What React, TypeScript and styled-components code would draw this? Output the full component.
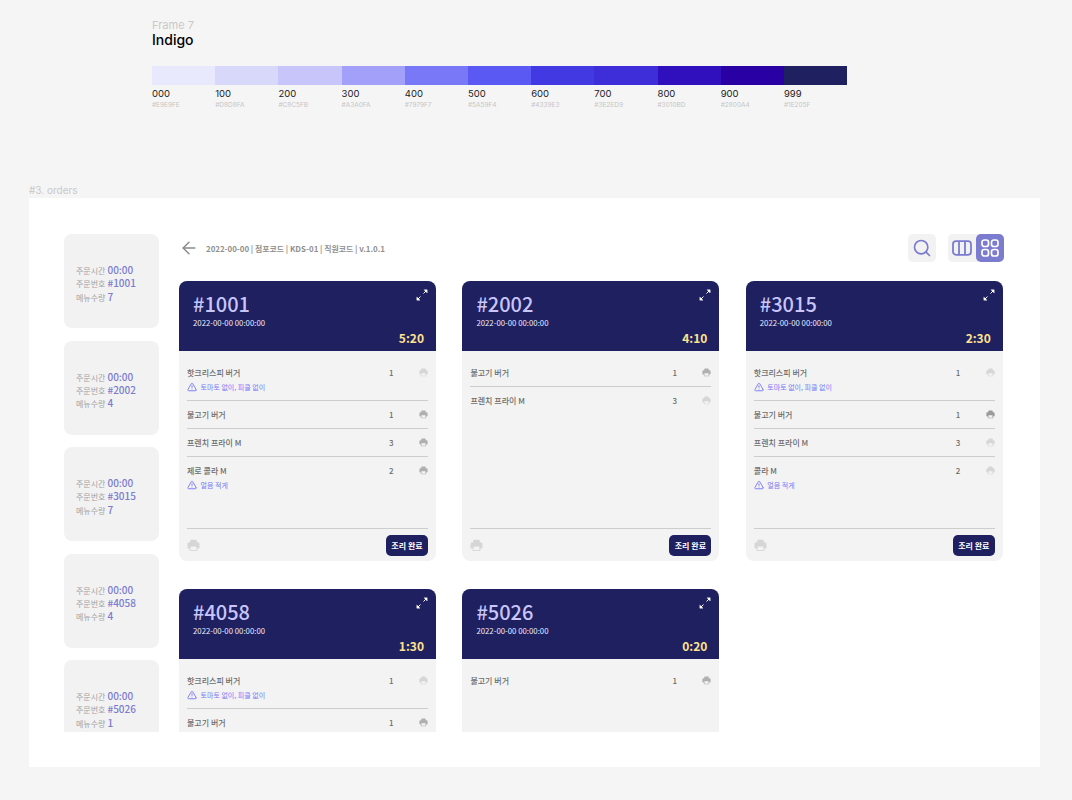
import React from "react";
import styled, { createGlobalStyle } from "styled-components";
import { ArrowLeft, Search, TriangleAlert } from "lucide-react";

const KR = `"Noto Sans CJK KR", "Noto Sans", sans-serif`;

const GlobalStyle = createGlobalStyle`
  html, body {
    margin: 0;
    background: #f5f5f5;
  }
  * {
    box-sizing: border-box;
  }
`;

const Page = styled.div`
  width: 1072px;
  height: 800px;
  overflow: hidden;
  padding: 19px 0 0 29px;
  font-family: Inter, sans-serif;
`;

const Palette = styled.section`
  margin-left: 123px;
  height: 165px;
`;
const FrameName = styled.div`
  font-size: 11px;
  line-height: 13px;
  color: #c9c9c9;
`;
const PaletteTitle = styled.div`
  font-size: 14px;
  line-height: 17px;
  margin-top: -1px;
  font-weight: 500;
  color: #000;
`;
const Swatches = styled.div`
  display: flex;
  width: 695px;
  margin-top: 18px;
`;
const Swatch = styled.div`
  flex: 1;
`;
const SwatchColor = styled.div<{ $color: string }>`
  height: 19px;
  background: ${(p) => p.$color};
`;
const SwatchName = styled.div`
  font-size: 9.5px;
  line-height: 12px;
  margin-top: 3px;
  color: #222;
`;
const SwatchHex = styled.div`
  font-size: 6.5px;
  line-height: 8px;
  margin-top: 1px;
  color: #c6c6c6;
`;

const SectionLabel = styled.div`
  font-size: 10px;
  line-height: 12px;
  height: 14px;
  color: #c9c9c9;
`;
const Frame = styled.main`
  width: 1011px;
  height: 569px;
  background: #fff;
  padding: 36px 36px 35px 35px;
  font-family: ${KR};
`;
const Clip = styled.div`
  display: flex;
  gap: 20px;
  height: 498px;
  overflow: hidden;
`;

const Queue = styled.aside`
  width: 95px;
  flex: none;
  display: flex;
  flex-direction: column;
  gap: 12.5px;
`;
const QueueCard = styled.div`
  height: 94px;
  flex: none;
  background: #f2f2f2;
  border-radius: 8px;
  padding: 29px 0 0 12px;
`;
const QueueRow = styled.div`
  display: flex;
  align-items: baseline;
  gap: 2px;
  height: 13.4px;
  line-height: 13.4px;
  font-size: 8px;
  color: #a3a3a3;
`;
const QueueValue = styled.span`
  font-size: 10px;
  font-weight: 500;
  color: #7b7bcf;
`;

const Content = styled.div`
  flex: 1;
  min-width: 0;
`;
const TopBar = styled.header`
  display: flex;
  align-items: center;
  height: 28px;
  margin-bottom: 19px;
`;
const BackIcon = styled(ArrowLeft)`
  width: 20px;
  height: 20px;
  margin-right: 7px;
  color: #8a8a8a;
  stroke-width: 1.7;
`;
const Breadcrumb = styled.div`
  flex: 1;
  font-size: 7.9px;
  font-weight: 700;
  color: #8f8f8f;
`;
const IconButton = styled.button<{ $active?: boolean }>`
  width: 28px;
  height: 28px;
  padding: 0;
  border: 0;
  display: flex;
  align-items: center;
  justify-content: center;
  border-radius: 5px;
  background: ${(p) => (p.$active ? "#7b7bcf" : "#f2f2f2")};
  color: ${(p) => (p.$active ? "#fff" : "#7b7bcf")};
`;
const Toggle = styled.div`
  display: flex;
  margin-left: 12px;
  border-radius: 5px;
  background: #f2f2f2;
`;

const Board = styled.div`
  display: grid;
  grid-template-columns: repeat(3, 257px);
  column-gap: 26.4px;
  row-gap: 28px;
`;
const Card = styled.article`
  height: 280px;
  display: flex;
  flex-direction: column;
  border-radius: 8px;
  overflow: hidden;
  background: #f3f3f3;
`;
const CardHead = styled.div`
  position: relative;
  height: 70px;
  flex: none;
  padding: 9px 12px 0 14px;
  background: #1e205f;
`;
const OrderNo = styled.div`
  font-size: 20px;
  line-height: 28px;
  font-weight: 500;
  color: #c8c5fb;
`;
const OrderDate = styled.div`
  font-size: 7.8px;
  line-height: 10px;
  font-weight: 400;
  color: #e9e9fe;
`;
const Elapsed = styled.div`
  margin-top: 2px;
  text-align: right;
  font-size: 12px;
  line-height: 16px;
  font-weight: 700;
  color: #ffe28f;
`;
const ExpandIcon = styled.svg`
  position: absolute;
  top: 8px;
  right: 8px;
  width: 12px;
  height: 12px;
`;
const CardBody = styled.div`
  flex: 1;
  display: flex;
  flex-direction: column;
  min-height: 0;
  padding: 8.25px 8px 0;
`;
const ItemList = styled.div`
  flex: 1;
  min-height: 0;
`;
const Item = styled.div`
  padding: 6.5px 0;
  border-bottom: 1px solid #cdcdcd;

  &:last-child {
    border-bottom: 0;
  }
`;
const ItemRow = styled.div`
  display: flex;
  align-items: center;
  height: 14px;
  font-size: 8px;
  font-weight: 500;
  color: #6c6c6c;
`;
const ItemName = styled.div`
  flex: 1;
`;
const ItemQty = styled.div`
  width: 30px;
  font-size: 8px;
`;
const Note = styled.div`
  display: flex;
  align-items: center;
  gap: 3.5px;
  height: 14px;
  padding-top: 1px;
  font-size: 7px;
  color: #7979f7;
`;
const NoteIcon = styled(TriangleAlert)`
  width: 10px;
  height: 10px;
  stroke-width: 2.2;
`;
const CardFoot = styled.div`
  height: 33px;
  flex: none;
  display: flex;
  align-items: center;
  justify-content: space-between;
  padding-top: 1px;
  border-top: 1px solid #cdcdcd;
`;
const DoneButton = styled.button`
  width: 42px;
  height: 21px;
  padding: 0;
  border: 0;
  border-radius: 5px;
  background: #1e205f;
  color: #fff;
  font-family: ${KR};
  font-size: 8px;
  font-weight: 700;
`;

const swatches = [
  ["000", "#E9E9FE"],
  ["100", "#D8D8FA"],
  ["200", "#C8C5FB"],
  ["300", "#A3A0FA"],
  ["400", "#7979F7"],
  ["500", "#5A59F4"],
  ["600", "#4339E3"],
  ["700", "#3E2ED9"],
  ["800", "#3010BD"],
  ["900", "#2800A4"],
  ["999", "#1E205F"],
];

type Tone = "light" | "mid" | "dark";
type MenuItem = { name: string; qty: number; tone: Tone; note?: string };
type Order = { no: string; count: number; time: string; items: MenuItem[]; foot?: boolean };

const NO_TOPPING = "토마토 없이, 피클 없이";
const LESS_ICE = "얼음 적게";

const orders: Order[] = [
  {
    no: "#1001",
    count: 7,
    time: "5:20",
    foot: true,
    items: [
      { name: "핫크리스피 버거", qty: 1, tone: "light", note: NO_TOPPING },
      { name: "불고기 버거", qty: 1, tone: "mid" },
      { name: "프렌치 프라이 M", qty: 3, tone: "mid" },
      { name: "제로 콜라 M", qty: 2, tone: "mid", note: LESS_ICE },
    ],
  },
  {
    no: "#2002",
    count: 4,
    time: "4:10",
    foot: true,
    items: [
      { name: "불고기 버거", qty: 1, tone: "mid" },
      { name: "프렌치 프라이 M", qty: 3, tone: "light" },
    ],
  },
  {
    no: "#3015",
    count: 7,
    time: "2:30",
    foot: true,
    items: [
      { name: "핫크리스피 버거", qty: 1, tone: "light", note: NO_TOPPING },
      { name: "불고기 버거", qty: 1, tone: "dark" },
      { name: "프렌치 프라이 M", qty: 3, tone: "light" },
      { name: "콜라 M", qty: 2, tone: "light", note: LESS_ICE },
    ],
  },
  {
    no: "#4058",
    count: 4,
    time: "1:30",
    items: [
      { name: "핫크리스피 버거", qty: 1, tone: "light", note: NO_TOPPING },
      { name: "불고기 버거", qty: 1, tone: "mid" },
    ],
  },
  {
    no: "#5026",
    count: 1,
    time: "0:20",
    items: [{ name: "불고기 버거", qty: 1, tone: "mid" }],
  },
];

const toneColors: Record<Tone, string> = {
  light: "#d6d6d6",
  mid: "#b0b0b0",
  dark: "#9a9a9a",
};

const PrintIcon: React.FC<{ size: number; tone: Tone }> = ({ size, tone }) => (
  <svg width={size} height={size} viewBox="0 0 12 12" fill="none">
    <path
      d="M3 3V1.800C3 1.100 3.500.8 4 .8h4c.5 0 1 .3 1 1V3h.8c1 0 1.700.7 1.700 1.700v3.100c0 .6-.4 1-1 1H9.500V11H2.500V8.800h-1c-.6 0-1-.4-1-1V4.700C.5 3.700 1.200 3 2.200 3z"
      fill={toneColors[tone]}
    />
    <rect x="3.300" y="7" width="5.400" height="3.300" fill="#f3f3f3" />
  </svg>
);

const Expand = () => (
  <ExpandIcon viewBox="0 0 12 12" fill="#fff" stroke="#fff" strokeWidth="1">
    <path d="M7.500 4.500 10 2" />
    <path d="M8 .8h3.200V4z" strokeWidth="0.4" />
    <path d="M4.500 7.500 2 10" />
    <path d="M.8 8v3.200H4z" strokeWidth="0.4" />
  </ExpandIcon>
);

const ColumnsIcon = () => (
  <svg width="20" height="20" viewBox="0 0 20 20" fill="none" stroke="currentColor" strokeWidth="1.800">
    <rect x="1" y="3.200" width="18" height="13.600" rx="3" />
    <path d="M7 3.200v13.600M13 3.200v13.600" />
  </svg>
);

const GridIcon = () => (
  <svg width="20" height="20" viewBox="0 0 20 20" fill="none" stroke="currentColor" strokeWidth="1.700">
    <rect x="2" y="2" width="6.500" height="6.500" rx="2.300" />
    <rect x="11.500" y="2" width="6.500" height="6.500" rx="2.300" />
    <rect x="2" y="11.500" width="6.500" height="6.500" rx="2.300" />
    <rect x="11.500" y="11.500" width="6.500" height="6.500" rx="2.300" />
  </svg>
);

const App: React.FC = () => (
  <Page>
    <GlobalStyle />
    <Palette>
      <FrameName>Frame 7</FrameName>
      <PaletteTitle>Indigo</PaletteTitle>
      <Swatches>
        {swatches.map(([name, hex]) => (
          <Swatch key={name}>
            <SwatchColor $color={hex} />
            <SwatchName>{name}</SwatchName>
            <SwatchHex>{hex}</SwatchHex>
          </Swatch>
        ))}
      </Swatches>
    </Palette>
    <SectionLabel>#3. orders</SectionLabel>
    <Frame>
      <Clip>
        <Queue>
          {orders.map((order) => (
            <QueueCard key={order.no}>
              <QueueRow>
                주문시간 <QueueValue>00:00</QueueValue>
              </QueueRow>
              <QueueRow>
                주문번호 <QueueValue>{order.no}</QueueValue>
              </QueueRow>
              <QueueRow>
                메뉴수량 <QueueValue>{order.count}</QueueValue>
              </QueueRow>
            </QueueCard>
          ))}
        </Queue>
        <Content>
          <TopBar>
            <BackIcon />
            <Breadcrumb>2022-00-00 | 점포코드 | KDS-01 | 직원코드 | v.1.0.1</Breadcrumb>
            <IconButton>
              <Search size={20} strokeWidth={2} />
            </IconButton>
            <Toggle>
              <IconButton>
                <ColumnsIcon />
              </IconButton>
              <IconButton $active>
                <GridIcon />
              </IconButton>
            </Toggle>
          </TopBar>
          <Board>
            {orders.map((order) => (
              <Card key={order.no}>
                <CardHead>
                  <OrderNo>{order.no}</OrderNo>
                  <OrderDate>2022-00-00 00:00:00</OrderDate>
                  <Elapsed>{order.time}</Elapsed>
                  <Expand />
                </CardHead>
                <CardBody>
                  <ItemList>
                    {order.items.map((item) => (
                      <Item key={item.name}>
                        <ItemRow>
                          <ItemName>{item.name}</ItemName>
                          <ItemQty>{item.qty}</ItemQty>
                          <PrintIcon size={9} tone={item.tone} />
                        </ItemRow>
                        {item.note && (
                          <Note>
                            <NoteIcon />
                            {item.note}
                          </Note>
                        )}
                      </Item>
                    ))}
                  </ItemList>
                  {order.foot && (
                    <CardFoot>
                      <PrintIcon size={13} tone="light" />
                      <DoneButton>조리 완료</DoneButton>
                    </CardFoot>
                  )}
                </CardBody>
              </Card>
            ))}
          </Board>
        </Content>
      </Clip>
    </Frame>
  </Page>
);

export default App;
